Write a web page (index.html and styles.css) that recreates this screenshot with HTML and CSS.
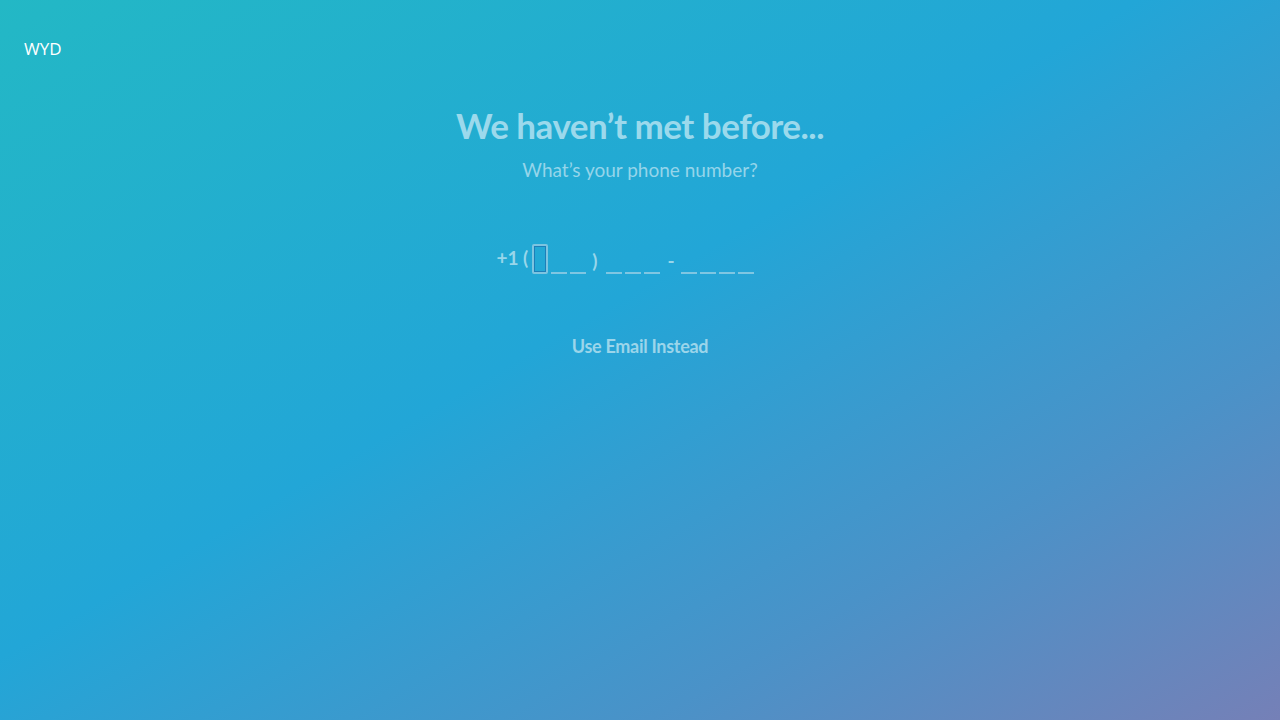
FILE: index.html
```html
<!DOCTYPE html>
<html lang="en">
<head>
<meta charset="utf-8">
<title>WYD</title>
<link rel="stylesheet" href="styles.css">
</head>
<body>
<div class="page">
  <header class="brand">WYD</header>
  <main class="content">
    <h1 class="title">We haven’t met before...</h1>
    <p class="subtitle">What’s your phone number?</p>
    <div class="phone">
      <span class="prefix">+1 (</span>
      <div class="group">
        <span class="slot active"></span>
        <span class="slot"></span>
        <span class="slot"></span>
      </div>
      <span class="sep paren">)</span>
      <div class="group">
        <span class="slot"></span>
        <span class="slot"></span>
        <span class="slot"></span>
      </div>
      <span class="sep dash">-</span>
      <div class="group">
        <span class="slot"></span>
        <span class="slot"></span>
        <span class="slot"></span>
        <span class="slot"></span>
      </div>
    </div>
    <button class="alt">Use Email Instead</button>
  </main>
</div>
</body>
</html>
```
FILE: styles.css
```css
html, body {
  margin: 0;
  padding: 0;
  height: 100%;
}
body {
  font-family: Lato, "Open Sans", sans-serif;
}
.page {
  width: 1280px;
  height: 720px;
  background: linear-gradient(150deg, #23b8c5 0%, #22a6d7 45%, #4a92c8 75%, #7580b7 100%);
  box-sizing: border-box;
  padding: 38px 24px 0;
  overflow: hidden;
}
.brand {
  color: #ffffff;
  font-family: "Open Sans", sans-serif;
  font-size: 17px;
  line-height: 22px;
}
.content {
  display: flex;
  flex-direction: column;
  align-items: center;
  margin-top: 40px;
}
.title {
  margin: 0;
  color: #9bd9ec;
  font-size: 35px;
  font-weight: 700;
  letter-spacing: -0.5px;
  line-height: 50px;
}
.subtitle {
  margin: 0;
  color: #95d5ea;
  font-size: 19px;
  line-height: 26px;
  margin-top: 7px;
}
.phone {
  display: flex;
  align-items: flex-end;
  margin-top: 59px;
  height: 32px;
  margin-right: 30px;
  color: #98d6ea;
  font-weight: 700;
  font-size: 19px;
}
.prefix {
  line-height: 26px;
  margin-bottom: 3px;
  margin-right: 4px;
}
.group {
  display: flex;
  gap: 3px;
  height: 30px;
  align-items: flex-end;
}
.slot {
  width: 16px;
  height: 2px;
  background: #7fc6e2;
  box-sizing: border-box;
}
.slot.active {
  height: 30px;
  background: transparent;
  border: 2px solid #7dc4e0;
  border-radius: 2px;
  box-shadow: inset 0 0 0 1px #1d7fb8;
}
.sep {
  line-height: 26px;
  margin-bottom: 3px;
}
.paren {
  margin: 0 8px 0 6px;
}
.dash {
  margin: 0 6px 0 8px;
}
.alt {
  margin-top: 61px;
  background: none;
  border: none;
  padding: 0;
  font-family: Lato, "Open Sans", sans-serif;
  font-size: 18px;
  font-weight: 700;
  color: #9bd5ea;
  letter-spacing: -0.3px;
  cursor: pointer;
}
```
